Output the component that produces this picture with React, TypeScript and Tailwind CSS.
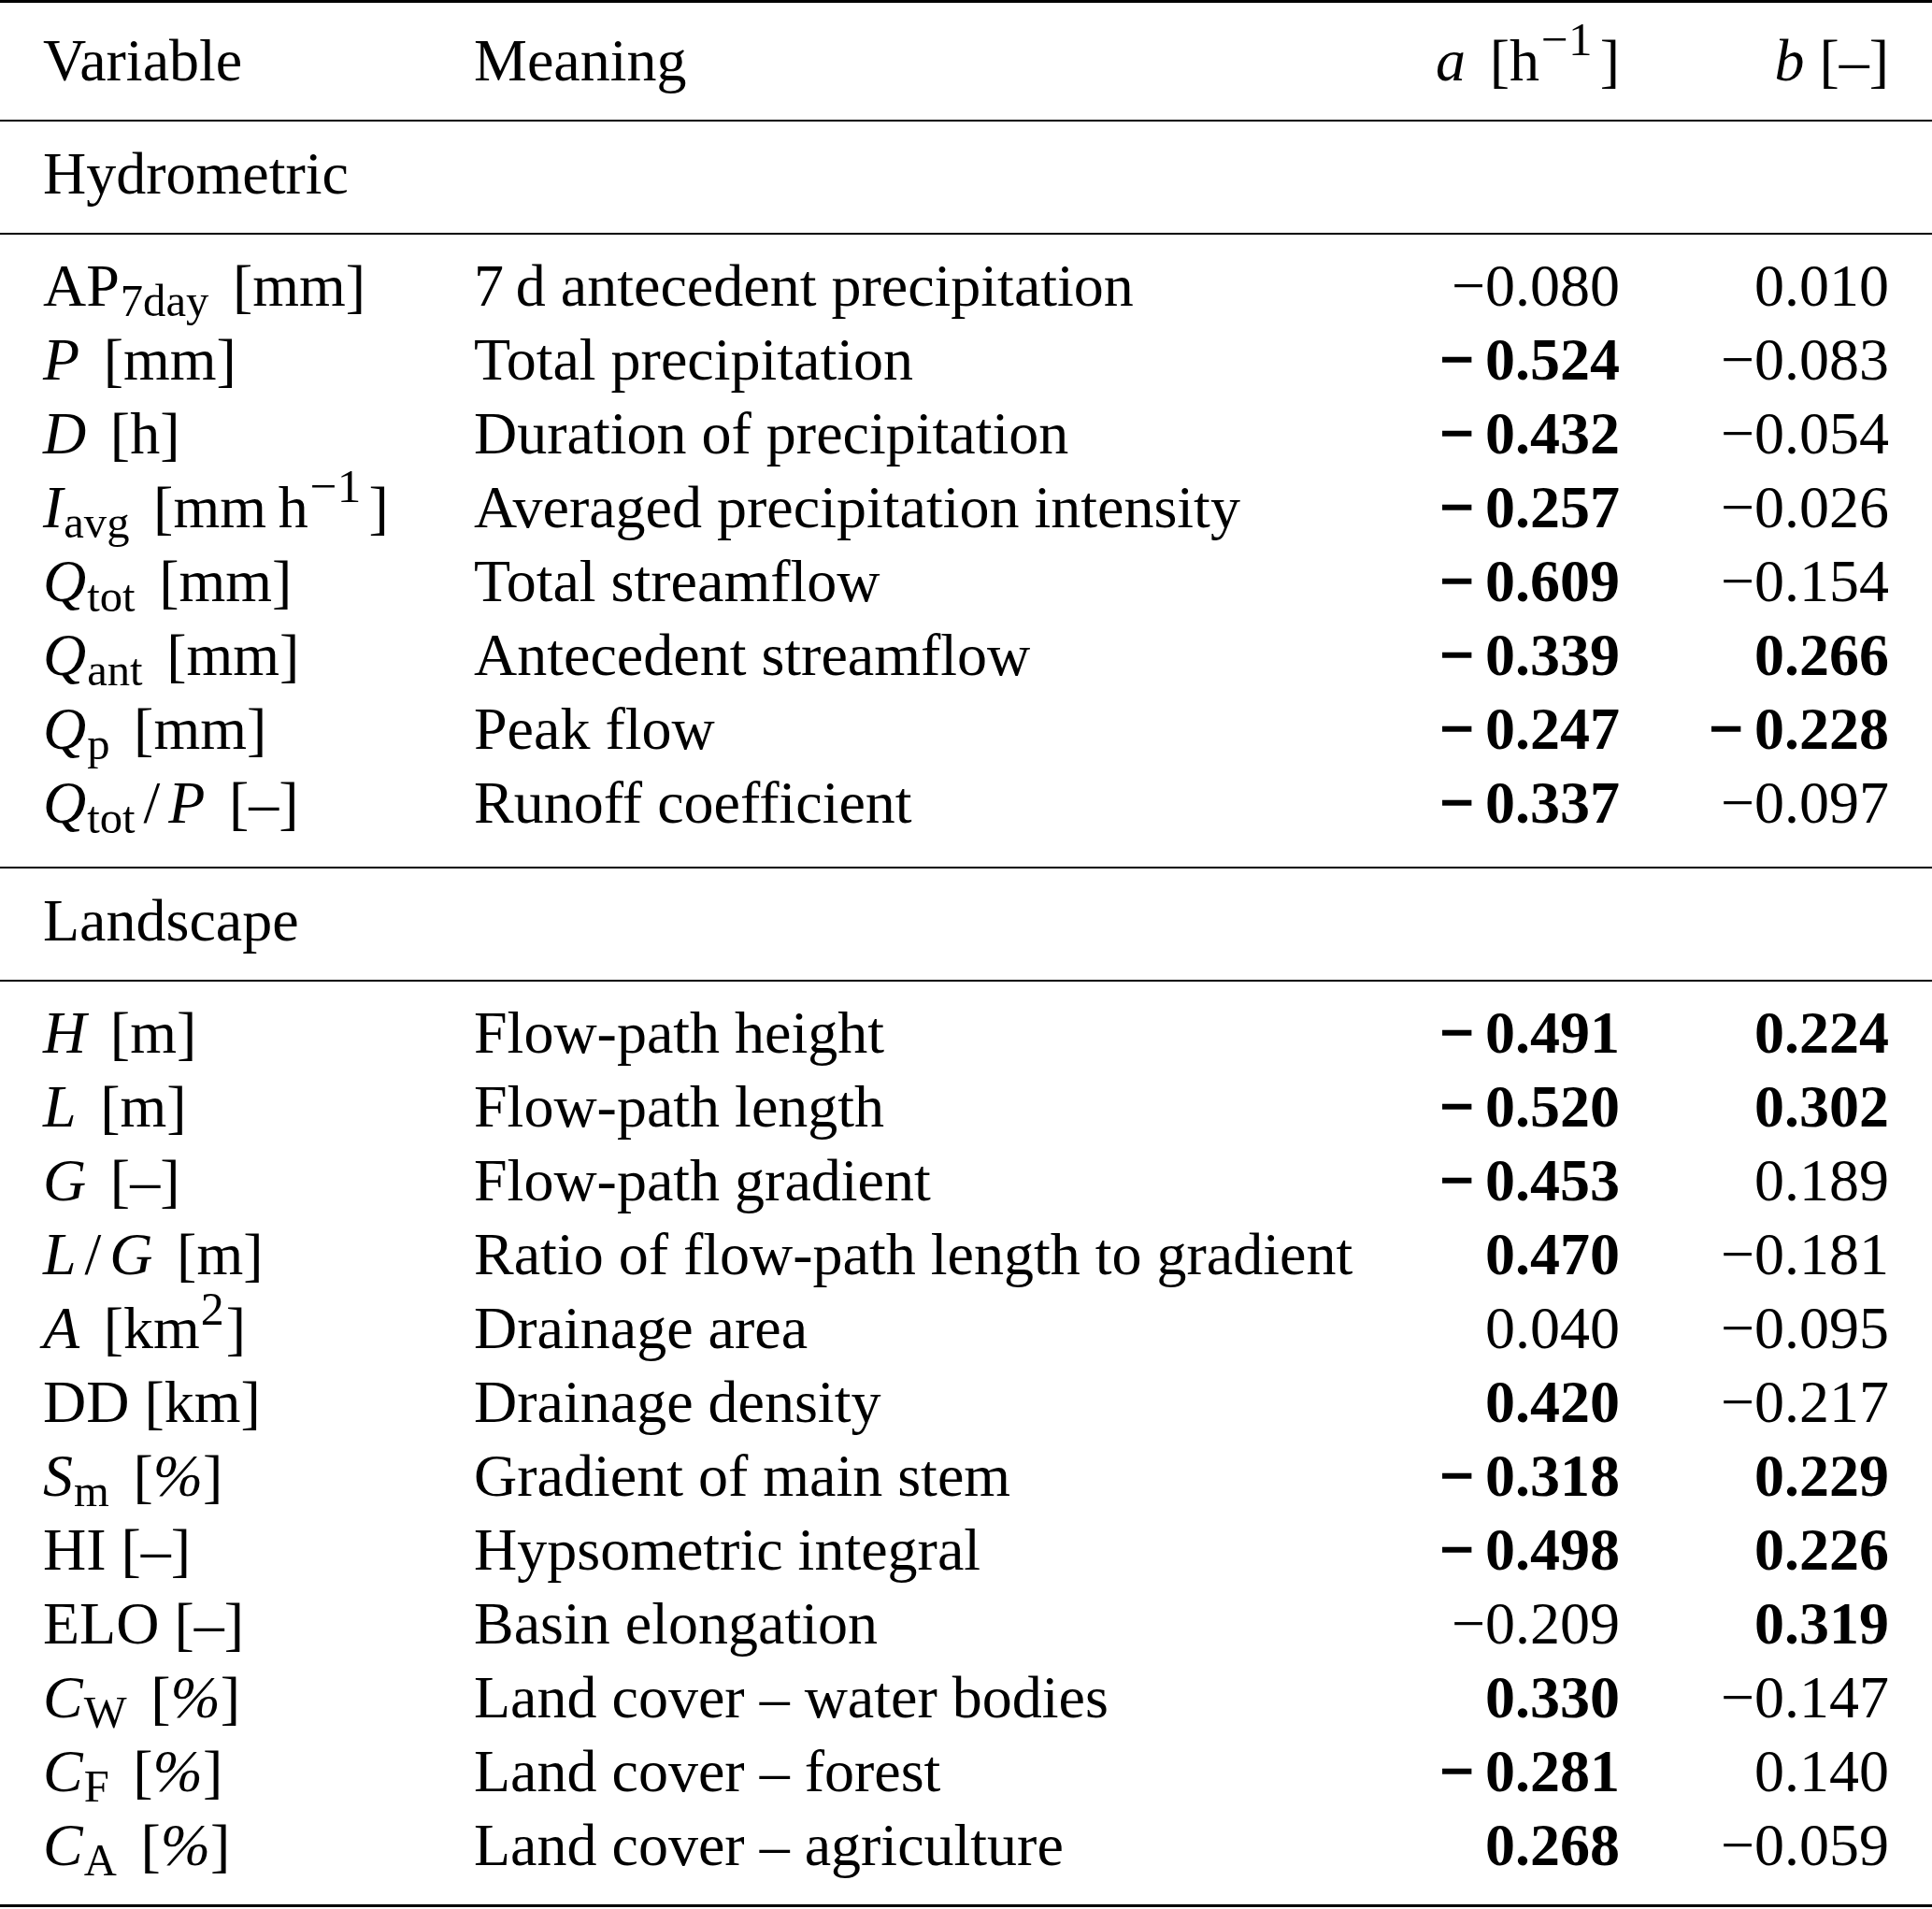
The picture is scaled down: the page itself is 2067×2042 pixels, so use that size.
import React from "react";

type Cell = { v: string; b?: boolean };
type Row = { name: React.ReactNode; meaning: string; a: Cell; b: Cell };

const Sub = ({ children }: { children: React.ReactNode }) => (
  <span className="relative top-[0.22em] text-[0.76em] leading-none ml-[0.02em]">{children}</span>
);
const Sup = ({ children, tight }: { children: React.ReactNode; tight?: boolean }) => (
  <span
    className={
      tight
        ? "relative -top-[0.5em] text-[0.78em] leading-none ml-[0.02em] mr-[0.04em]"
        : "relative -top-[0.52em] text-[0.8em] leading-none ml-[0.04em] mr-[0.16em]"
    }
  >
    {children}
  </span>
);
const U = ({ children }: { children: React.ReactNode }) => (
  <span className="ml-[0.4em]">{children}</span>
);
const Sl = () => <span className="mx-[0.14em]">/</span>;

const Num = ({ c }: { c: Cell }) => {
  if (c.b) {
    if (c.v.startsWith("−")) {
      return (
        <span className="font-bold">
          <span className="mr-[0.19em] [-webkit-text-stroke:1.6px_black]">−</span>
          {c.v.slice(1)}
        </span>
      );
    }
    return <span className="font-bold">{c.v}</span>;
  }
  return <span>{c.v}</span>;
};

const hydro: Row[] = [
  { name: <>AP<Sub>7day</Sub><U>[mm]</U></>, meaning: "7\u2009d antecedent precipitation", a: { v: "−0.080" }, b: { v: "0.010" } },
  { name: <><i>P</i><U>[mm]</U></>, meaning: "Total precipitation", a: { v: "−0.524", b: true }, b: { v: "−0.083" } },
  { name: <><i>D</i><U>[h]</U></>, meaning: "Duration of precipitation", a: { v: "−0.432", b: true }, b: { v: "−0.054" } },
  { name: <><i>I</i><Sub>avg</Sub><U>[mm{"\u2009"}h<Sup>−1</Sup>]</U></>, meaning: "Averaged precipitation intensity", a: { v: "−0.257", b: true }, b: { v: "−0.026" } },
  { name: <><i>Q</i><Sub>tot</Sub><U>[mm]</U></>, meaning: "Total streamflow", a: { v: "−0.609", b: true }, b: { v: "−0.154" } },
  { name: <><i>Q</i><Sub>ant</Sub><U>[mm]</U></>, meaning: "Antecedent streamflow", a: { v: "−0.339", b: true }, b: { v: "0.266", b: true } },
  { name: <><i>Q</i><Sub>p</Sub><U>[mm]</U></>, meaning: "Peak flow", a: { v: "−0.247", b: true }, b: { v: "−0.228", b: true } },
  { name: <><i>Q</i><Sub>tot</Sub><Sl /><i>P</i><U>[–]</U></>, meaning: "Runoff coefficient", a: { v: "−0.337", b: true }, b: { v: "−0.097" } },
];

const land: Row[] = [
  { name: <><i>H</i><U>[m]</U></>, meaning: "Flow-path height", a: { v: "−0.491", b: true }, b: { v: "0.224", b: true } },
  { name: <><i>L</i><U>[m]</U></>, meaning: "Flow-path length", a: { v: "−0.520", b: true }, b: { v: "0.302", b: true } },
  { name: <><i>G</i><U>[–]</U></>, meaning: "Flow-path gradient", a: { v: "−0.453", b: true }, b: { v: "0.189" } },
  { name: <><i>L</i><Sl /><i>G</i><U>[m]</U></>, meaning: "Ratio of flow-path length to gradient", a: { v: "0.470", b: true }, b: { v: "−0.181" } },
  { name: <><i>A</i><U>[km<Sup tight>2</Sup>]</U></>, meaning: "Drainage area", a: { v: "0.040" }, b: { v: "−0.095" } },
  { name: <>DD [km]</>, meaning: "Drainage density", a: { v: "0.420", b: true }, b: { v: "−0.217" } },
  { name: <><i>S</i><Sub>m</Sub><U>[<i>%</i>]</U></>, meaning: "Gradient of main stem", a: { v: "−0.318", b: true }, b: { v: "0.229", b: true } },
  { name: <>HI [–]</>, meaning: "Hypsometric integral", a: { v: "−0.498", b: true }, b: { v: "0.226", b: true } },
  { name: <>ELO [–]</>, meaning: "Basin elongation", a: { v: "−0.209" }, b: { v: "0.319", b: true } },
  { name: <><i>C</i><Sub>W</Sub><U>[<i>%</i>]</U></>, meaning: "Land cover – water bodies", a: { v: "0.330", b: true }, b: { v: "−0.147" } },
  { name: <><i>C</i><Sub>F</Sub><U>[<i>%</i>]</U></>, meaning: "Land cover – forest", a: { v: "−0.281", b: true }, b: { v: "0.140" } },
  { name: <><i>C</i><Sub>A</Sub><U>[<i>%</i>]</U></>, meaning: "Land cover – agriculture", a: { v: "0.268", b: true }, b: { v: "−0.059" } },
];

const gridCls = "grid grid-cols-[461px_993px_233px_288px] px-[46px] h-[79px] leading-[79px] whitespace-nowrap";

const DataRow = ({ r }: { r: Row }) => (
  <div className={gridCls}>
    <div>{r.name}</div>
    <div>{r.meaning}</div>
    <div className="text-right"><Num c={r.a} /></div>
    <div className="text-right"><Num c={r.b} /></div>
  </div>
);

export default function App() {
  return (
    <div className="w-[2067px] h-[2042px] bg-white text-black font-['Liberation_Serif','Times_New_Roman',serif] text-[64px]">
      <div className="h-[3px] bg-black" />
      <div className="pt-[22px] pb-[24px]">
        <div className={gridCls}>
          <div>Variable</div>
          <div>Meaning</div>
          <div className="text-right"><i>a</i><U>[h<Sup>−1</Sup>]</U></div>
          <div className="text-right"><i>b</i> [–]</div>
        </div>
      </div>
      <div className="h-[2px] bg-black" />
      <div className="pt-[16px] pb-[24px]">
        <div className={gridCls}><div>Hydrometric</div></div>
      </div>
      <div className="h-[2px] bg-black" />
      <div className="pt-[15px] pb-[29px]">
        {hydro.map((r, i) => <DataRow key={i} r={r} />)}
      </div>
      <div className="h-[2px] bg-black" />
      <div className="pt-[16px] pb-[24px]">
        <div className={gridCls}><div>Landscape</div></div>
      </div>
      <div className="h-[2px] bg-black" />
      <div className="pt-[15px] pb-[24px]">
        {land.map((r, i) => <DataRow key={i} r={r} />)}
      </div>
      <div className="h-[3px] bg-black" />
    </div>
  );
}
